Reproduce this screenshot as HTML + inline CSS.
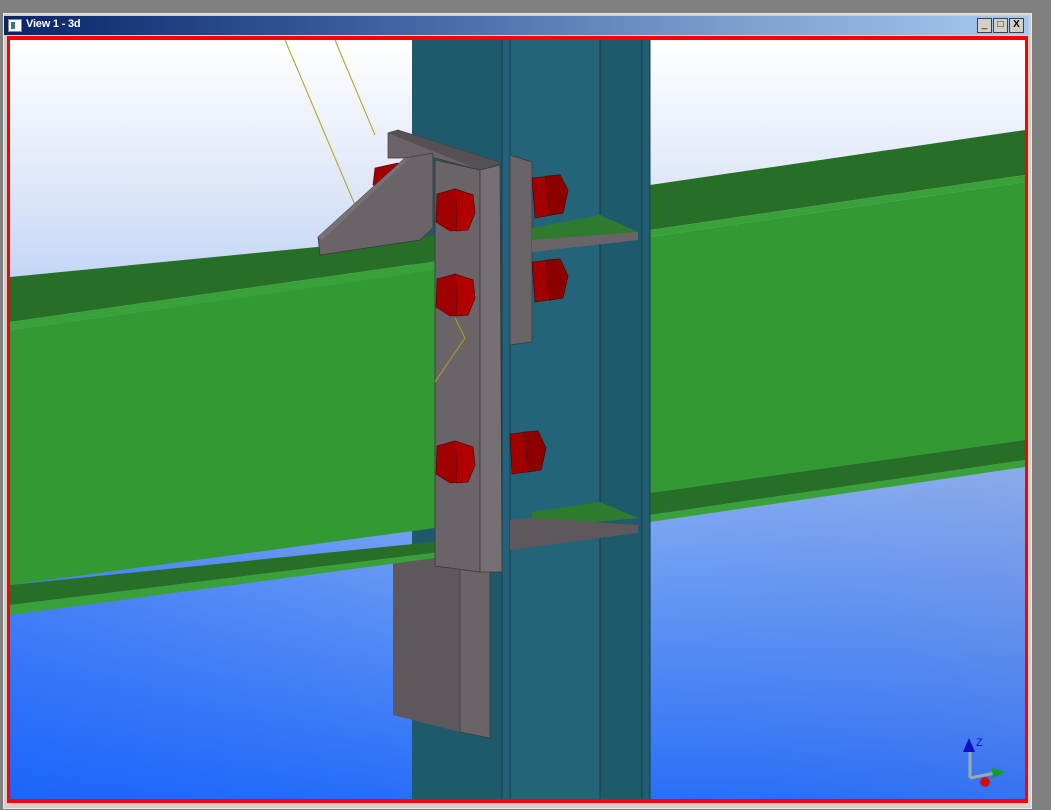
<!DOCTYPE html>
<html><head><style>
html,body{margin:0;padding:0;width:1051px;height:810px;overflow:hidden;background:#808080;font-family:"Liberation Sans",sans-serif}
#win{position:absolute;left:3px;top:13px;width:1027px;height:794px;background:#d4d0c8;border:1px solid #e8e8e8}
#title{position:absolute;left:4px;top:16px;width:1025px;height:19px;background:linear-gradient(90deg,#0a246a,#3a5ea0 35%,#7a9ccc 70%,#a6caf0)}
#title span{position:absolute;left:22px;top:2px;color:#fff;font-size:11px;font-weight:bold;letter-spacing:-0.2px}
.ic{position:absolute;left:4px;top:3px;width:12px;height:11px;background:#fff;border:1px solid #888}
.ic:after{content:"";position:absolute;left:2px;top:2px;width:4px;height:7px;background:#2a7a8a}
.btn{position:absolute;top:2px;width:13px;height:13px;background:#d4d0c8;border:1px solid #404040;font-size:10px;line-height:12px;text-align:center;color:#000}
</style></head><body>
<div id="win"></div>
<div id="title"><div class="ic"></div><span>View 1 - 3d</span>
<div class="btn" style="left:973px">_</div><div class="btn" style="left:989px">□</div><div class="btn" style="left:1005px;font-weight:bold">X</div></div>
<svg style="position:absolute;left:0;top:0" width="1051" height="810" viewBox="0 0 1051 810">
<defs>
<linearGradient id="bg" x1="0" y1="0" x2="0" y2="1">
<stop offset="0" stop-color="#ffffff"/><stop offset="0.2" stop-color="#dde6f8"/><stop offset="0.55" stop-color="#90b4f0"/><stop offset="1" stop-color="#2a70f8"/></linearGradient>
<linearGradient id="bg2" x1="0" y1="0" x2="1" y2="0">
<stop offset="0" stop-color="#0050ff" stop-opacity="0.35"/><stop offset="0.5" stop-color="#0050ff" stop-opacity="0"/><stop offset="1" stop-color="#8080c0" stop-opacity="0.15"/></linearGradient>
</defs>
<rect x="7" y="36" width="1021" height="767" fill="#ff0000"/>
<rect x="10" y="40" width="1015" height="759" fill="url(#bg)"/>
<rect x="10" y="420" width="1015" height="379" fill="url(#bg2)"/>
<g stroke="#b0a020" stroke-width="1" fill="none"><line x1="285" y1="40" x2="355" y2="205"/><line x1="335" y1="40" x2="375" y2="135"/></g>
<!-- right beam -->
<polygon points="650,185 1025,130 1025,175 650,230" fill="#276e27"/>
<polygon points="650,230 1025,175 1025,182 650,237" fill="#3aa03a"/>
<polygon points="650,237 1025,182 1025,440 650,493" fill="#339933"/>
<polygon points="650,493 1025,440 1025,460 650,515" fill="#276e27"/>
<polygon points="650,515 1025,460 1025,467 650,522" fill="#3aa03a"/>
<!-- column -->
<rect x="412" y="40" width="238" height="759" fill="#1f596c"/>
<rect x="502" y="40" width="8" height="759" fill="#23627a"/>
<rect x="510" y="40" width="90" height="759" fill="#246478"/>
<rect x="642" y="40" width="8" height="759" fill="#215e72"/>
<g stroke="#143c48" stroke-width="1"><line x1="502" y1="40" x2="502" y2="799"/><line x1="510" y1="40" x2="510" y2="799"/><line x1="600" y1="40" x2="600" y2="799"/><line x1="642" y1="40" x2="642" y2="799"/><line x1="650" y1="40" x2="650" y2="799"/></g>
<!-- lower gray block -->
<polygon points="393,555 460,560 460,732 393,715" fill="#5e585c"/>
<polygon points="460,560 490,568 490,738 460,732" fill="#6a6468" stroke="#3a3a3a" stroke-width="0.7"/>
<!-- column side plate -->
<polygon points="510,155 532,162 532,342 510,345" fill="#6a6468" stroke="#3a3a3a" stroke-width="0.7"/>
<!-- stiffeners -->
<polygon points="532,228 600,215 638,232 532,248" fill="#2f7a2f"/>
<polygon points="532,240 638,232 638,240 532,252" fill="#6a6468"/>
<polygon points="532,512 600,502 638,518 532,528" fill="#2f7a2f"/>
<polygon points="510,520 532,518 638,525 638,533 510,550" fill="#5e585c"/>
<!-- right bolts -->
<g stroke="#500000" stroke-width="0.6">
<polygon points="532,178 560,175 568,190 563,213 535,218" fill="#a00000"/>
<polygon points="546,176 560,175 568,190 563,213 550,215" fill="#8c0000"/>
<polygon points="532,262 560,259 568,276 563,298 535,302" fill="#a00000"/>
<polygon points="546,260 560,259 568,276 563,298 550,300" fill="#8c0000"/>
<polygon points="510,434 538,431 546,448 541,470 512,474" fill="#a00000"/>
<polygon points="524,432 538,431 546,448 541,470 528,472" fill="#8c0000"/>
<polygon points="375,168 398,163 405,178 385,192 373,185" fill="#a00000"/>
</g>
<!-- left beam -->
<polygon points="10,277 470,232 472,256 10,322" fill="#276e27"/>
<polygon points="10,322 472,256 472,265 10,330" fill="#3aa03a"/>
<polygon points="10,330 435,270 435,528 10,585" fill="#339933"/>
<polygon points="10,585 472,538 472,548 10,605" fill="#276e27"/>
<polygon points="10,605 472,548 472,553 10,615" fill="#3aa03a"/>
<!-- end plate back -->
<polygon points="388,133 398,130 502,163 480,170 435,158 388,158" fill="#6a6468" stroke="#3a3a3a" stroke-width="0.7"/>
<polygon points="398,130 502,163 480,170 435,152 388,133" fill="#555054"/>
<!-- gusset -->
<polygon points="318,237 405,158 433,153 433,228 420,240 320,255" fill="#6a6468" stroke="#3a3a3a" stroke-width="0.8"/>
<polygon points="318,237 405,158 410,158 322,240" fill="#777175"/>
<!-- end plate -->
<polygon points="435,160 480,170 480,572 435,566" fill="#6a6468" stroke="#3a3a3a" stroke-width="0.8"/>
<polygon points="480,170 500,165 502,572 480,572" fill="#767074" stroke="#3a3a3a" stroke-width="0.8"/>
<g stroke="#b0a020" stroke-width="1" fill="none"><polyline points="455,318 465,338 435,382"/></g>
<!-- left bolts -->
<g stroke="#500000" stroke-width="0.6">
<polygon points="437,194 455,189 473,195 475,213 468,230 450,231 436,222" fill="#a00000"/>
<polygon points="455,189 473,195 475,213 468,230 456,231 457,210" fill="#b00000"/>
<polygon points="437,279 455,274 473,280 475,298 468,315 450,316 436,307" fill="#a00000"/>
<polygon points="455,274 473,280 475,298 468,315 456,316 457,295" fill="#b00000"/>
<polygon points="437,446 455,441 473,447 475,465 468,482 450,483 436,474" fill="#a00000"/>
<polygon points="455,441 473,447 475,465 468,482 456,483 457,462" fill="#b00000"/>
</g>
<!-- axis -->
<g>
<line x1="970" y1="748" x2="970" y2="778" stroke="#9aa" stroke-width="3"/>
<line x1="970" y1="778" x2="1000" y2="772" stroke="#9aa" stroke-width="3"/>
<polygon points="963,752 969,738 975,752" fill="#1010c0"/>
<text x="976" y="746" font-size="11" fill="#1010c0">Z</text>
<circle cx="985" cy="782" r="5" fill="#d01010"/>
<polygon points="992,768 1005,772 993,778" fill="#10a010"/>
</g>
</svg>
</body></html>
